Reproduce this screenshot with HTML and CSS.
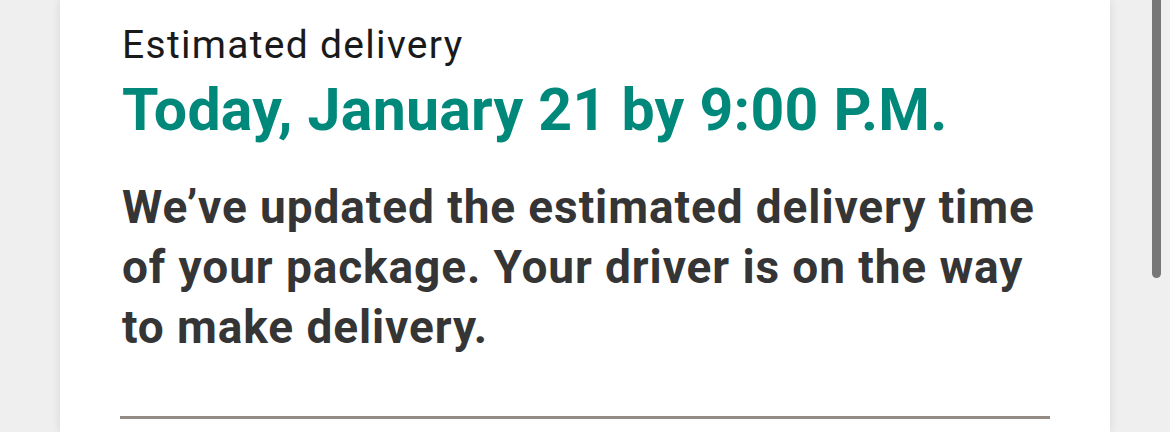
FILE: index.html
```html
<!DOCTYPE html>
<html lang="en">
<head>
  <meta charset="UTF-8" />
  <meta name="viewport" content="width=device-width, initial-scale=1.0" />
  <title>Delivery Update</title>
  <link rel="stylesheet" href="styles.css">
</head>
<body>
  <div class="card">
    <p class="label">Estimated delivery</p>
    <h1 class="eta">Today, January 21 by 9:00 P.M.</h1>
    <p class="message">We’ve updated the estimated delivery time of your package. Your driver is on the way to make delivery.</p>
    <hr class="divider" />
  </div>
  <div class="scrollbar"></div>
</body>
</html>
```

FILE: styles.css
```css
body {
  margin: 0;
  background: #efefef;
  font-family: Roboto, "Noto Sans", sans-serif;
  overflow: hidden;
}
.card {
  margin: 0 60px;
  padding: 20px 60px 0 62px;
  background: #fff;
  box-shadow: 0 0 10px rgba(0, 0, 0, 0.1);
  height: 432px;
  box-sizing: border-box;
}
.label {
  margin: 0;
  font-size: 39px;
  line-height: 50px;
  letter-spacing: 1.3px;
  color: #1a1a1a;
}
.eta {
  margin: 0;
  font-size: 59px;
  line-height: 80px;
  font-weight: 700;
  letter-spacing: 0.25px;
  color: #00897b;
}
.message {
  margin: 27px 0 0;
  font-size: 46px;
  line-height: 60px;
  font-weight: 700;
  letter-spacing: 0.9px;
  color: #353535;
}
.divider {
  margin: 59px 0 0 -2px;
  border: none;
  height: 3px;
  background: #958b85;
}
.scrollbar {
  position: absolute;
  top: 0;
  left: 1152px;
  width: 9px;
  height: 278px;
  background: #777;
  border-radius: 0 0 5px 5px;
}
```
